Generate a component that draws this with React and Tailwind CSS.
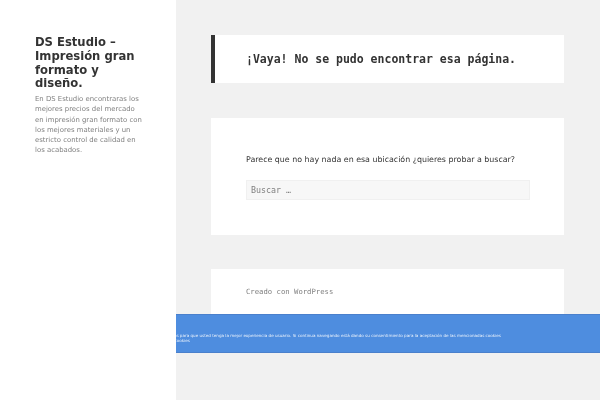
const sans = "font-['DejaVu_Sans',sans-serif]";
const mono = "font-['DejaVu_Sans_Mono',monospace]";

function Sidebar() {
  return (
    <aside className="relative z-10 h-full w-[176px] shrink-0 bg-white pl-[35px] pr-[35px] pt-[36px]">
      <h1 className="text-[11.6px] font-bold leading-[13.8px] text-[#333] will-change-transform">
        DS Estudio – Impresión gran formato y diseño.
      </h1>
      <p className="mt-[3px] w-[108px] text-[6.9px] leading-[10.3px] text-[#808080] will-change-transform">
        En DS Estudio encontraras los mejores precios del mercado en impresión gran formato con los mejores materiales y un estricto control de calidad en los acabados.
      </p>
    </aside>
  );
}

function Main() {
  return (
    <main className="flex-1 overflow-hidden pl-[35px] pr-[36px] pt-[35px]">
      <header className="flex h-[48px] items-center border-l-[4px] border-[#333] bg-white pl-[31px] pt-[1px]">
        <h2 className={`${mono} text-[11.5px] font-bold text-[#333] will-change-transform`}>
          ¡Vaya! No se pudo encontrar esa página.
        </h2>
      </header>

      <section className="mt-[35px] h-[117px] bg-white pl-[35px] pr-[34px] pt-[34px]">
        <p className="pt-[1px] text-[7.9px] leading-[14px] text-[#333] will-change-transform">
          Parece que no hay nada en esa ubicación ¿quieres probar a buscar?
        </p>
        <input
          placeholder="Buscar …"
          className={`${mono} mt-[13px] block h-[20px] w-full border border-[#f0f0f0] bg-[#f7f7f7] px-[4px] text-[8.3px] will-change-transform placeholder:text-[#808080]`}
        />
      </section>

      <footer className="mt-[34px] h-[80px] bg-white px-[35px] pt-[18px]">
        <p className={`${mono} text-[7.25px] leading-[10px] text-[#808080] will-change-transform`}>
          Creado con WordPress
        </p>
      </footer>
    </main>
  );
}

function CookieBar() {
  return (
    <div className="absolute left-0 right-0 top-[314px] flex h-[39px] items-center border-y border-[#4a80cc] bg-[#4e8ddf] pl-[96px] pt-[9px]">
      <p className="w-[406px] text-[4.1px] leading-[5px] text-[#e8f0fb] will-change-transform">
        Utilizamos cookies propias y de terceros para que usted tenga la mejor experiencia de usuario. Si continua navegando está dando su consentimiento para la aceptación de las mencionadas cookies y la aceptación de nuestra política de cookies
      </p>
    </div>
  );
}

export default function App() {
  return (
    <div className={`${sans} relative flex h-[400px] w-[600px] overflow-hidden bg-[#f1f1f1]`}>
      <Sidebar />
      <Main />
      <CookieBar />
    </div>
  );
}
